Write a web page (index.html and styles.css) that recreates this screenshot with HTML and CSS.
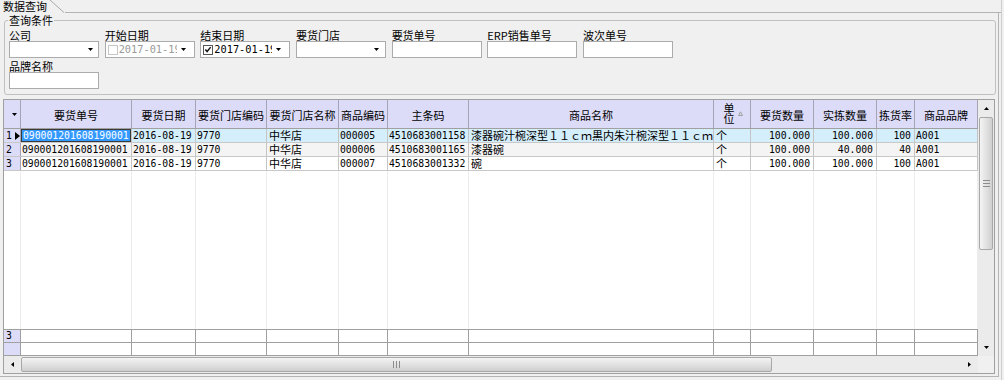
FILE: index.html
```html
<!DOCTYPE html>
<html lang="zh-CN">
<head>
    <meta charset="UTF-8">
    <title>数据查询</title>
    <link rel="stylesheet" href="styles.css">
</head>
<body>
<div class="window">
    <div class="tabs">
        <div class="tab">数据查询</div>
        <svg class="tab-edge" width="15" height="13" viewBox="0 0 15 13"><path d="M0 0 L14 12.5" stroke="#a8a8a8" fill="none"/></svg>
        <div class="tab-rest"></div>
    </div>

    <div class="page">
        <fieldset class="query">
            <legend>查询条件</legend>
            <div class="fields">
                <div class="field">
                    <label>公司</label>
                    <div class="box combo">
                        <span class="box-text"></span>
                        <span class="drop"><svg width="5" height="3" viewBox="0 0 5 3"><path d="M0 0h5L2.5 3z"/></svg></span>
                    </div>
                </div>
                <div class="field">
                    <label>开始日期</label>
                    <div class="box date disabled">
                        <span class="check"></span>
                        <span class="box-text mono">2017-01-19</span>
                        <span class="drop"><svg width="5" height="3" viewBox="0 0 5 3"><path d="M0 0h5L2.5 3z"/></svg></span>
                    </div>
                </div>
                <div class="field">
                    <label>结束日期</label>
                    <div class="box date">
                        <span class="check checked"><svg width="9" height="9" viewBox="0 0 9 9"><path d="M1.5 4.5 L3.5 6.8 L7.5 1.8" stroke="#111" stroke-width="1.6" fill="none"/></svg></span>
                        <span class="box-text mono">2017-01-19</span>
                        <span class="drop"><svg width="5" height="3" viewBox="0 0 5 3"><path d="M0 0h5L2.5 3z"/></svg></span>
                    </div>
                </div>
                <div class="field">
                    <label>要货门店</label>
                    <div class="box combo">
                        <span class="box-text"></span>
                        <span class="drop"><svg width="5" height="3" viewBox="0 0 5 3"><path d="M0 0h5L2.5 3z"/></svg></span>
                    </div>
                </div>
                <div class="field">
                    <label>要货单号</label>
                    <div class="box"></div>
                </div>
                <div class="field">
                    <label>ERP销售单号</label>
                    <div class="box"></div>
                </div>
                <div class="field">
                    <label>波次单号</label>
                    <div class="box"></div>
                </div>
            </div>
            <div class="fields second">
                <div class="field">
                    <label>品牌名称</label>
                    <div class="box"></div>
                </div>
            </div>
        </fieldset>

        <div class="grid">
            <div class="grid-main">
                <div class="cells">
                    <div class="row head">
                        <div class="hcell ind"><svg width="5" height="3" viewBox="0 0 5 3"><path d="M0 0h5L2.5 3z"/></svg></div>
                        <div class="hcell">要货单号</div>
                        <div class="hcell">要货日期</div>
                        <div class="hcell">要货门店编码</div>
                        <div class="hcell">要货门店名称</div>
                        <div class="hcell">商品编码</div>
                        <div class="hcell">主条码</div>
                        <div class="hcell">商品名称</div>
                        <div class="hcell sort">
                            <span class="two-line">单位</span>
                            <svg class="sort-mark" width="5" height="5" viewBox="0 0 5 5"><path d="M0.5 4.5h4L2.5 0.8z" stroke="#a0a0a0" fill="none"/></svg>
                        </div>
                        <div class="hcell">要货数量</div>
                        <div class="hcell">实拣数量</div>
                        <div class="hcell">拣货率</div>
                        <div class="hcell">商品品牌</div>
                    </div>

                    <div class="row data current">
                        <div class="cell ind mono">1<span class="pointer"></span></div>
                        <div class="cell mono focus">090001201608190001</div>
                        <div class="cell mono">2016-08-19</div>
                        <div class="cell mono">9770</div>
                        <div class="cell cn">中华店</div>
                        <div class="cell mono">000005</div>
                        <div class="cell mono">4510683001158</div>
                        <div class="cell cn">漆器碗汁椀深型１１ｃｍ黒内朱汁椀深型１１ｃｍ</div>
                        <div class="cell cn">个</div>
                        <div class="cell mono right">100.000</div>
                        <div class="cell mono right">100.000</div>
                        <div class="cell mono right">100</div>
                        <div class="cell mono">A001</div>
                    </div>
                    <div class="row data alt">
                        <div class="cell ind mono">2</div>
                        <div class="cell mono">090001201608190001</div>
                        <div class="cell mono">2016-08-19</div>
                        <div class="cell mono">9770</div>
                        <div class="cell cn">中华店</div>
                        <div class="cell mono">000006</div>
                        <div class="cell mono">4510683001165</div>
                        <div class="cell cn">漆器碗</div>
                        <div class="cell cn">个</div>
                        <div class="cell mono right">100.000</div>
                        <div class="cell mono right">40.000</div>
                        <div class="cell mono right">40</div>
                        <div class="cell mono">A001</div>
                    </div>
                    <div class="row data">
                        <div class="cell ind mono">3</div>
                        <div class="cell mono">090001201608190001</div>
                        <div class="cell mono">2016-08-19</div>
                        <div class="cell mono">9770</div>
                        <div class="cell cn">中华店</div>
                        <div class="cell mono">000007</div>
                        <div class="cell mono">4510683001332</div>
                        <div class="cell cn">碗</div>
                        <div class="cell cn">个</div>
                        <div class="cell mono right">100.000</div>
                        <div class="cell mono right">100.000</div>
                        <div class="cell mono right">100</div>
                        <div class="cell mono">A001</div>
                    </div>

                    <div class="row filler">
                        <div></div><div></div><div></div><div></div><div></div><div></div><div></div>
                        <div></div><div></div><div></div><div></div><div></div><div></div>
                    </div>

                    <div class="row foot">
                        <div class="cell ind mono">3</div>
                        <div class="cell"></div><div class="cell"></div><div class="cell"></div><div class="cell"></div>
                        <div class="cell"></div><div class="cell"></div><div class="cell"></div><div class="cell"></div>
                        <div class="cell"></div><div class="cell"></div><div class="cell"></div><div class="cell"></div>
                    </div>
                    <div class="row foot last">
                        <div class="cell ind"></div>
                        <div class="cell"></div><div class="cell"></div><div class="cell"></div><div class="cell"></div>
                        <div class="cell"></div><div class="cell"></div><div class="cell"></div><div class="cell"></div>
                        <div class="cell"></div><div class="cell"></div><div class="cell"></div><div class="cell"></div>
                    </div>
                </div>

                <div class="vscroll">
                    <div class="sb-btn"><svg width="5" height="3" viewBox="0 0 5 3"><path d="M0 3h5L2.5 0z"/></svg></div>
                    <div class="sb-track">
                        <div class="vthumb"><span class="grip-h"></span></div>
                    </div>
                    <div class="sb-btn"><svg width="5" height="3" viewBox="0 0 5 3"><path d="M0 0h5L2.5 3z"/></svg></div>
                </div>
            </div>

            <div class="grid-bottom">
                <div class="hscroll">
                    <div class="sb-btn"><svg width="3" height="5" viewBox="0 0 3 5"><path d="M3 0v5L0 2.5z"/></svg></div>
                    <div class="sb-track">
                        <div class="hthumb"><span class="grip-v"></span></div>
                    </div>
                    <div class="sb-btn"><svg width="3" height="5" viewBox="0 0 3 5"><path d="M0 0v5L3 2.5z"/></svg></div>
                </div>
                <div class="corner"></div>
            </div>
        </div>
    </div>
</div>
</body>
</html>
```

FILE: styles.css
```css
* {
    box-sizing: border-box;
    margin: 0;
    padding: 0;
}

body {
    background-color: #f0f0f0;
    color: #000;
    font-family: "Noto Sans CJK SC", "Noto Sans", sans-serif;
    font-size: 11px;
    line-height: 12px;
}

.mono {
    font-family: "DejaVu Sans Mono", "Noto Sans CJK SC", monospace;
    font-size: 9.75px;
}

.window {
    width: 1002px;
    height: 380px;
    border-right: 1px solid #cfcfcf;
}

/* tab strip */

.tabs {
    display: flex;
    height: 13px;
}

.tab {
    width: 50px;
    padding-left: 3px;
    line-height: 12px;
    white-space: nowrap;
}

.tab-edge {
    display: block;
}

.tab-rest {
    flex: 1;
    border-bottom: 1px solid #b4b4b4;
}

.page {
    width: 999px;
    height: 364px;
    padding-top: 1px;
    border-right: 1px solid #b4b4b4;
    border-bottom: 1px solid #b4b4b4;
}

/* query group */

.query {
    margin: 0 2px 0 4px;
    padding: 2px 4px 5px 4px;
    border: 1px solid #c0c0c0;
    border-radius: 3px;
    min-width: 0;
}

.query legend {
    line-height: 13px;
    padding: 0 1px;
    margin-left: -1px;
}

.fields {
    display: flex;
    gap: 5.67px;
}

.fields.second {
    margin-top: 2px;
}

.field {
    width: 90px;
    display: flex;
    flex-direction: column;
}

.field label {
    height: 12px;
    line-height: 12px;
    white-space: nowrap;
}

.box {
    height: 17px;
    background-color: #fff;
    border: 1px solid #ababab;
    display: flex;
    align-items: center;
}

.box-text {
    flex: 1;
    overflow: hidden;
    white-space: nowrap;
    line-height: 15px;
}

.date .box-text {
    font-size: 10.3px;
}

.drop {
    width: 16px;
    height: 15px;
    display: flex;
    align-items: center;
    justify-content: center;
}

.drop svg {
    display: block;
}

.date .drop {
    width: 17px;
    justify-content: flex-start;
    padding-left: 4px;
}

.check {
    width: 10px;
    height: 10px;
    margin: 0 1px 0 2px;
    border: 1px solid #555;
    background-color: #fff;
    display: flex;
    align-items: center;
    justify-content: center;
}

.check svg {
    display: block;
}

.disabled .check {
    border-color: #c6c6c6;
}

.disabled .box-text {
    color: #9a9a9a;
}

/* data grid */

.grid {
    width: 992px;
    height: 275px;
    margin: 4px 0 2px 3px;
    border: 1px solid #a0a0a0;
    background-color: #fff;
    display: flex;
    flex-direction: column;
}

.grid-main {
    display: flex;
    height: 256px;
}

.cells {
    width: 974px;
    display: flex;
    flex-direction: column;
}

.row {
    display: grid;
    grid-template-columns: 17px 111px 64px 71px 72px 49px 81px 245px 37px 63px 63px 38px 63px;
}

.head {
    height: 29px;
    background-color: #dcdcf9;
    border-bottom: 1px solid #a0a0a0;
}

.hcell {
    border-right: 1px solid #a4a4b4;
    display: flex;
    align-items: center;
    justify-content: center;
    white-space: nowrap;
    overflow: hidden;
    padding-top: 1px;
}

.hcell.ind {
    justify-content: flex-end;
    padding-right: 3px;
}

.hcell svg {
    display: block;
}

.hcell.sort {
    gap: 3px;
    padding-left: 2px;
}

.two-line {
    width: 11px;
    white-space: normal;
    line-height: 10px;
    margin-top: -3px;
}

.sort-mark {
    margin-top: -3px;
}

.data {
    height: 14px;
    border-bottom: 1px solid #c8c8c8;
}

.cell {
    border-right: 1px solid #c4c4c4;
    padding: 0 1px;
    line-height: 13px;
    white-space: nowrap;
    overflow: hidden;
}

.cell.cn {
    font-size: 11px;
    padding-left: 2px;
}

.cell.right {
    text-align: right;
    padding-right: 3px;
}

.cell.ind {
    background-color: #dcdcf9;
    border-right-color: #a4a4b4;
    padding-left: 2px;
    display: flex;
    align-items: center;
    gap: 2px;
}

.current {
    background-color: #d4eefb;
}

.alt {
    background-color: #f4f4f4;
}

.cell.focus {
    background-color: #3399ff;
    color: #fff;
    box-shadow: inset 0 0 0 1px #3a3a3a;
    padding-left: 2px;
}

.pointer {
    width: 0;
    height: 0;
    border-left: 5px solid #000;
    border-top: 4px solid transparent;
    border-bottom: 4px solid transparent;
    margin-left: 1px;
}

.filler {
    flex: 1;
}

.filler div {
    border-right: 1px solid #ececec;
}

.foot {
    height: 13px;
    border-top: 1px solid #a0a0a0;
}

.foot.last {
    height: 14px;
    border-bottom: 1px solid #a0a0a0;
}

.foot .cell {
    border-right-color: #a0a0a0;
    line-height: 12px;
}

.foot .cell.ind {
    border-right-color: #a0a0a0;
}

/* scroll bars */

.vscroll {
    width: 16px;
    background-color: #ebebeb;
    display: flex;
    flex-direction: column;
}

.sb-btn {
    width: 16px;
    height: 17px;
    display: flex;
    align-items: center;
    justify-content: center;
}

.sb-btn svg {
    display: block;
}

.sb-track {
    flex: 1;
    display: flex;
}

.vscroll .sb-track {
    flex-direction: column;
}

.vthumb {
    height: 133px;
    margin: 0 1px;
    border: 1px solid #a8a8a8;
    border-radius: 2px;
    background: linear-gradient(to right, #f4f4f4, #e2e2e2 50%, #d0d0d0);
    display: flex;
    align-items: center;
    justify-content: center;
}

.grip-h {
    width: 7px;
    height: 7px;
    background: repeating-linear-gradient(to bottom, #8c8c8c 0 1px, transparent 1px 3px);
}

.grid-bottom {
    display: flex;
    height: 17px;
}

.hscroll {
    width: 974px;
    background-color: #ebebeb;
    display: flex;
}

.hscroll .sb-btn {
    width: 17px;
    height: 17px;
}

.hthumb {
    width: 751px;
    margin: 1px 0;
    border: 1px solid #a8a8a8;
    border-radius: 2px;
    background: linear-gradient(to bottom, #f4f4f4, #e2e2e2 50%, #cecece);
    display: flex;
    align-items: center;
    justify-content: center;
}

.grip-v {
    width: 7px;
    height: 7px;
    background: repeating-linear-gradient(to right, #8c8c8c 0 1px, transparent 1px 3px);
}

.corner {
    width: 16px;
    background-color: #f0f0f0;
}
```
